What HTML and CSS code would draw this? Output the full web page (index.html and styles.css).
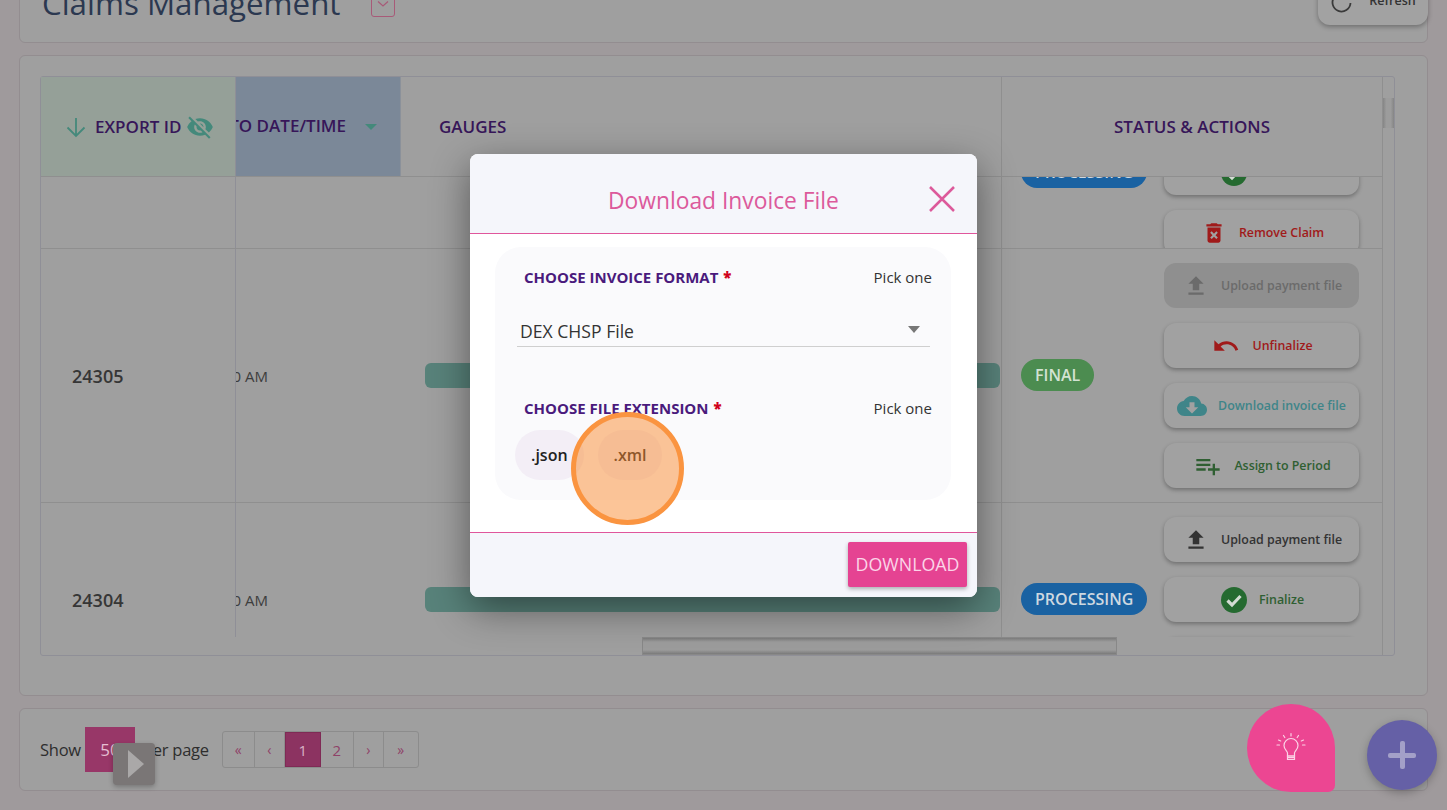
FILE: index.html
```html
<!DOCTYPE html>
<html lang="en">
<head>
<meta charset="utf-8">
<title>Claims Management</title>
<link rel="stylesheet" href="styles.css">
</head>
<body>
<svg class="defs" width="0" height="0" aria-hidden="true">
  <symbol id="i-upload" viewBox="0 0 24 24"><path d="M9 16h6v-6h4l-7-7-7 7h4zm-4 2h14v2H5z"/></symbol>
  <symbol id="i-check" viewBox="0 0 26 26"><circle cx="13" cy="13" r="13"/><path d="M6.5 13.5l4.5 4.5 8.5-9" fill="none" stroke="#d3dcd3" stroke-width="3.2"/></symbol>
  <symbol id="i-trash" viewBox="0 0 24 24"><path d="M6 19c0 1.100.9 2 2 2h8c1.100 0 2-.9 2-2V7H6v12zm2.460-7.120l1.410-1.410L12 12.590l2.120-2.120 1.410 1.410L13.410 14l2.120 2.120-1.410 1.410L12 15.410l-2.120 2.120-1.410-1.410L10.590 14l-2.130-2.120zM15.500 4l-1-1h-5l-1 1H5v2h14V4z"/></symbol>
  <symbol id="i-undo" viewBox="0 0 24 24"><path d="M12.500 8c-2.650 0-5.050.99-6.900 2.600L2 7v9h9l-3.620-3.620c1.390-1.160 3.160-1.880 5.120-1.880 3.540 0 6.550 2.310 7.600 5.500l2.370-.78C21.080 11.030 17.150 8 12.500 8z"/></symbol>
  <symbol id="i-cloud" viewBox="0 0 24 24"><path d="M19.350 10.040C18.670 6.590 15.640 4 12 4 9.110 4 6.600 5.640 5.350 8.040 2.340 8.360 0 10.910 0 14c0 3.310 2.690 6 6 6h13c2.760 0 5-2.240 5-5 0-2.640-2.050-4.780-4.650-4.960zM17 13l-5 5-5-5h3V9h4v4h3z"/></symbol>
  <symbol id="i-assign" viewBox="0 0 24 24"><path d="M14 10H2v2h12v-2zm0-4H2v2h12V6zm4 8v-4h-2v4h-4v2h4v4h2v-4h4v-2h-4zM2 16h8v-2H2v2z"/></symbol>
</svg>

<div class="page">
  <section class="card card-title">
    <div class="title-group">
      <h1 class="page-title">Claims Management</h1>
      <span class="chevron-box">
        <svg width="14" height="8" viewBox="0 0 14 8"><path d="M2 1.500l5 4.500 5-4.500" fill="none" stroke="#a85a78" stroke-width="1.200"/></svg>
      </span>
    </div>
    <button class="refresh-btn">
      <svg width="24" height="24" viewBox="0 0 24 24"><path d="M19 8.500A9 9 0 1 0 20.500 14" fill="none" stroke="#3a3a3a" stroke-width="1.800"/><path d="M20 3v7h-7z" fill="#3a3a3a"/></svg>
      <span>Refresh</span>
    </button>
  </section>

  <section class="card card-table">
    <div class="tbl-box">
      <div class="tbl-main">
        <div class="tbl-grid tbl-head">
          <div class="th th-export">
            <svg class="i-arrow" width="24" height="24" viewBox="0 0 24 24"><path d="M12 3v18M3.500 12.500l8.500 8.500 8.500-8.500" fill="none" stroke="#44897b" stroke-width="1.800"/></svg>
            <span>EXPORT ID</span>
            <svg class="i-eye" width="28" height="28" viewBox="0 0 24 24"><path fill="#44897b" d="M12 7c2.760 0 5 2.240 5 5 0 .65-.13 1.260-.36 1.830l2.920 2.920c1.510-1.260 2.700-2.890 3.430-4.750-1.730-4.390-6-7.500-11-7.500-1.400 0-2.740.25-3.980.7l2.160 2.160C10.740 7.130 11.350 7 12 7zM2 4.270l2.280 2.280.46.46C3.080 8.300 1.780 10.020 1 12c1.730 4.390 6 7.500 11 7.500 1.550 0 3.030-.3 4.380-.84l.42.42L19.730 22 21 20.730 3.270 3 2 4.270zM7.530 9.800l1.550 1.550c-.05.21-.08.43-.08.65 0 1.660 1.340 3 3 3 .22 0 .44-.03.65-.08l1.550 1.550c-.67.33-1.410.53-2.200.53-2.760 0-5-2.240-5-5 0-.79.2-1.530.53-2.200zm4.310-.78l3.150 3.150.02-.16c0-1.660-1.340-3-3-3l-.17.01z"/></svg>
          </div>
          <div class="th th-date">
            <span>TO DATE/TIME</span>
            <i class="sort-caret"></i>
          </div>
          <div class="th th-gauges"><span>GAUGES</span></div>
          <div class="th th-status"><span>STATUS &amp; ACTIONS</span></div>
        </div>

        <div class="tbl-body">
          <div class="tbl-grid row row-clipped">
            <div class="td td-id"></div>
            <div class="td td-date"></div>
            <div class="td td-gauge"></div>
            <div class="td td-status">
              <div class="pill-col"><span class="pill pill-blue">PROCESSING</span></div>
              <div class="actions">
                <a class="act act-dark"><svg class="ic" width="26" height="26"><use href="#i-upload"/></svg><span>Upload payment file</span></a>
                <a class="act act-green"><svg class="ic ic-check" width="26" height="26"><use href="#i-check"/></svg><span>Finalize</span></a>
                <a class="act act-red"><svg class="ic" width="26" height="26"><use href="#i-trash"/></svg><span>Remove Claim</span></a>
              </div>
            </div>
          </div>

          <div class="tbl-grid row">
            <div class="td td-id">24305</div>
            <div class="td td-date"><span>10:30 AM</span></div>
            <div class="td td-gauge"><div class="gauge"></div></div>
            <div class="td td-status">
              <div class="pill-col"><span class="pill pill-green">FINAL</span></div>
              <div class="actions">
                <a class="act act-disabled"><svg class="ic" width="26" height="26"><use href="#i-upload"/></svg><span>Upload payment file</span></a>
                <a class="act act-red"><svg class="ic" width="28" height="28"><use href="#i-undo"/></svg><span>Unfinalize</span></a>
                <a class="act act-teal"><svg class="ic" width="30" height="30"><use href="#i-cloud"/></svg><span>Download invoice file</span></a>
                <a class="act act-green"><svg class="ic" width="28" height="28"><use href="#i-assign"/></svg><span>Assign to Period</span></a>
              </div>
            </div>
          </div>

          <div class="tbl-grid row">
            <div class="td td-id">24304</div>
            <div class="td td-date"><span>10:30 AM</span></div>
            <div class="td td-gauge"><div class="gauge"></div></div>
            <div class="td td-status">
              <div class="pill-col"><span class="pill pill-blue">PROCESSING</span></div>
              <div class="actions">
                <a class="act act-dark"><svg class="ic" width="26" height="26"><use href="#i-upload"/></svg><span>Upload payment file</span></a>
                <a class="act act-green"><svg class="ic ic-check" width="26" height="26"><use href="#i-check"/></svg><span>Finalize</span></a>
                <a class="act act-red"><svg class="ic" width="26" height="26"><use href="#i-trash"/></svg><span>Remove Claim</span></a>
              </div>
            </div>
          </div>
        </div>

        <div class="hscroll"><div class="hthumb"></div></div>
      </div>
      <div class="vscroll"><div class="vthumb"></div></div>
    </div>
  </section>

  <section class="card card-pager">
    <span class="pager-text">Show</span>
    <span class="per-box">50</span>
    <span class="pager-text">per page</span>
    <nav class="pager">
      <a class="pg pg-first">«</a>
      <a class="pg pg-prev">‹</a>
      <a class="pg pg-num pg-active">1</a>
      <a class="pg pg-num">2</a>
      <a class="pg pg-prev">›</a>
      <a class="pg pg-last">»</a>
    </nav>
  </section>
</div>

<div class="play-btn"><i class="play-tri"></i></div>

<div class="bulb-fab">
  <svg width="34" height="34" viewBox="0 0 34 34" fill="none" stroke="#fbd3e6" stroke-width="1.200" stroke-linecap="round">
    <path d="M13.500 25v-3c0-1.500-3.500-3.500-3.500-7.500a7 7 0 0 1 14 0c0 4-3.500 6-3.500 7.500v3z"/>
    <path d="M13.500 25h7v3.500h-7zM13.500 26.700h7"/>
    <path d="M17 2.500v2.500M9.500 4.500l1.300 2M24.500 4.500l-1.300 2M4.500 9l2.200 1M29.500 9l-2.200 1M3 14h2.500M28.500 14h2.500"/>
  </svg>
</div>
<div class="plus-fab"><i class="plus-h"></i><i class="plus-v"></i></div>

<div class="modal">
  <header class="modal-head">
    <h2 class="modal-title">Download Invoice File</h2>
    <svg class="modal-close" width="28" height="28" viewBox="0 0 28 28"><path d="M2 2l24 24M26 2L2 26" fill="none" stroke="#dc5a9b" stroke-width="2.500"/></svg>
  </header>
  <div class="modal-body">
    <div class="panel">
      <div class="field-head">
        <span class="field-label">CHOOSE INVOICE FORMAT <b class="req">*</b></span>
        <span class="field-hint">Pick one</span>
      </div>
      <div class="select">
        <span>DEX CHSP File</span>
        <i class="select-caret"></i>
      </div>
      <div class="field-head field-head-2">
        <span class="field-label">CHOOSE FILE EXTENSION <b class="req">*</b></span>
        <span class="field-hint">Pick one</span>
      </div>
      <div class="chips">
        <span class="chip">.json</span>
        <span class="chip">.xml</span>
      </div>
    </div>
  </div>
  <footer class="modal-foot">
    <button class="download-btn">DOWNLOAD</button>
  </footer>
</div>

<div class="click-spot"></div>
</body>
</html>
```

FILE: styles.css
```css
* { box-sizing: border-box; }
html, body { margin: 0; height: 810px; overflow: hidden; }
body {
  background: #9f9a9c;
  font-family: "Open Sans", "Liberation Sans", sans-serif;
  color: #333;
}
.defs { position: absolute; }
.page {
  display: flex;
  flex-direction: column;
  gap: 12px;
  padding: 0 19px;
  margin-top: -31px;
}
.card {
  background: #9f9f9f;
  border: 1px solid #938d90;
  border-radius: 6px;
}

/* title card */
.card-title {
  height: 74px;
  display: flex;
  justify-content: space-between;
  align-items: flex-start;
  padding-left: 22px;
}
.title-group { display: flex; align-items: flex-start; }
.page-title {
  margin: 13px 0 0;
  font-size: 31.300px;
  line-height: 40px;
  font-weight: 500;
  color: #2b3850;
  white-space: nowrap;
}
.chevron-box {
  margin: 22px 0 0 30px;
  width: 24px;
  height: 25px;
  border: 1px solid #a85a78;
  border-radius: 3px;
  display: flex;
  align-items: flex-end;
  justify-content: center;
  padding-bottom: 8px;
}
.refresh-btn {
  width: 110px;
  height: 55px;
  border: 0;
  margin-right: -1px;
  background: #a2a2a2;
  border-radius: 12px;
  box-shadow: 0 2px 5px rgba(0,0,0,.3);
  display: flex;
  align-items: flex-end;
  justify-content: center;
  gap: 15px;
  padding: 0 0 12px;
  font: 600 12.5px "Open Sans", sans-serif;
  color: #333;
}
.refresh-btn span { margin-bottom: 4px; }

/* table card */
.card-table {
  height: 641px;
  padding: 20px 32px 0 20px;
}
.tbl-box {
  display: flex;
  height: 580px;
  border: 1px solid #8f8f97;
  border-radius: 3px;
}
.tbl-main { width: 1341px; display: flex; flex-direction: column; }
.tbl-grid {
  display: grid;
  grid-template-columns: 195px 165px 601px 380px;
}
.tbl-head { height: 100px; border-bottom: 1px solid #8f8f8f; }
.th {
  display: flex;
  align-items: center;
  font-size: 17px;
  font-weight: 600;
  color: #371659;
  white-space: nowrap;
  overflow: hidden;
}
.th-export { background: #95a098; padding-left: 23px; border-right: 1px solid #8f8f97; }
.th-export span { margin-left: 7px; }
.i-arrow { flex: none; }
.i-eye { flex: none; margin-left: 5px; }
.th-date {
  background: #7b8898;
  justify-content: flex-end;
  padding-right: 23px;
  border-right: 1px solid #8b919a;
}
.th-date span { flex: none; margin-top: -3px; }
.sort-caret {
  flex: none;
  margin-left: 19px;
  border-left: 6px solid transparent;
  border-right: 6px solid transparent;
  border-top: 6px solid #44897b;
}
.th-gauges { padding-left: 38px; border-right: 1px solid #8f8f8f; }
.th-status { justify-content: center; }

.tbl-body { height: 460px; overflow: hidden; }
.row { border-bottom: 1px solid #8f8f8f; }
.row-clipped { height: 72px; overflow: hidden; align-items: start; }
.row-clipped .td-status { margin-top: -101px; }
.td {
  display: flex;
  align-items: center;
  overflow: hidden;
  min-width: 0;
}
.row-clipped .td-id, .row-clipped .td-date, .row-clipped .td-gauge { height: 72px; }
.td-id {
  padding-left: 31px;
  font-size: 18px;
  font-weight: 600;
  color: #363636;
  border-right: 1px solid #8f8f97;
}
.td-date {
  justify-content: flex-end;
  padding-right: 133px;
  font-size: 15px;
  color: #3d3d3d;
  white-space: nowrap;
}
.td-date span { flex: none; }
.td-gauge {
  padding-left: 24px;
  border-right: 1px solid #8f8f8f;
}
.gauge {
  width: 575px;
  height: 25px;
  border-radius: 6px;
  background: #58827a;
}
.td-status { overflow: visible; }
.pill-col { width: 162px; flex: none; padding-left: 19px; display: flex; }
.pill {
  height: 32px;
  margin-bottom: 1px;
  padding: 0 14px;
  border-radius: 16px;
  line-height: 32px;
  font-size: 16px;
  font-weight: 600;
  color: #ced8e0;
}
.pill-blue { background: #1a62a2; }
.pill-green { background: #4c8c50; color: #d3e2d3; }
.actions {
  display: flex;
  flex-direction: column;
  gap: 15px;
  padding: 14px 0;
}
.act {
  width: 195px;
  height: 45px;
  border-radius: 12px;
  background: #a1a1a1;
  box-shadow: 0 2px 4px rgba(0,0,0,.3);
  display: flex;
  align-items: center;
  justify-content: center;
  gap: 12px;
  padding-left: 2px;
  font-size: 12.400px;
  font-weight: 600;
  white-space: nowrap;
}
.ic { flex: none; fill: currentColor; }
.act-dark { color: #333; }
.act-green { color: #2f5f32; }
.act-green .ic-check { color: #256a30; }
.act-red { color: #a01a1a; }
.act-teal { color: #3f8589; gap: 11px; padding-left: 0; }
.act-disabled { background: #8f8f8f; color: #6b6b6b; box-shadow: none; }

.hscroll { height: 18px; flex: none; }
.hthumb {
  width: 475px;
  height: 18px;
  margin-left: 601px;
  background: linear-gradient(#7a7a7a, #9c9c9c 25%, #9c9c9c 75%, #7a7a7a);
  border: 1px solid #888;
}
.vscroll { flex: 1; border-left: 1px solid #8f8f8f; }
.vthumb {
  height: 30px;
  margin-top: 21px;
  background: linear-gradient(90deg, #858585, #9c9c9c 30%, #9c9c9c 70%, #858585);
}

/* pager card */
.card-pager {
  height: 83px;
  display: flex;
  align-items: center;
  padding-left: 20px;
}
.pager-text { font-size: 16.500px; letter-spacing: -0.25px; color: #2e2e2e; }
.per-box {
  width: 50px;
  height: 45px;
  margin: 0 8px 0 4px;
  background: #983768;
  color: #e5bfd2;
  font-size: 17px;
  font-weight: 500;
  display: flex;
  align-items: center;
  justify-content: center;
}
.pager {
  display: flex;
  height: 37px;
  margin-left: 13px;
  border: 1px solid #8c8c8c;
  border-radius: 3px;
}
.pg {
  display: flex;
  align-items: center;
  justify-content: center;
  border-right: 1px solid #8c8c8c;
  color: #8f4268;
  font-size: 14px;
}
.pg-first { width: 32px; }
.pg-prev { width: 30px; }
.pg-last { width: 34px; border-right: 0; }
.pg-num { width: 33px; font-size: 15px; }
.pg-active { width: 36px; background: #8c3361; color: #d9b3c6; border: 1px solid #7f2a55; }

/* overlays */
.play-btn {
  position: absolute;
  left: 113px;
  top: 743px;
  width: 42px;
  height: 42px;
  border-radius: 4px;
  background: #7a7676;
  box-shadow: 0 2px 5px rgba(0,0,0,.25);
  display: flex;
  align-items: center;
  justify-content: center;
}
.play-tri {
  margin-left: 3px;
  border-left: 16px solid #aaa8a8;
  border-top: 14px solid transparent;
  border-bottom: 14px solid transparent;
}
.bulb-fab {
  position: absolute;
  left: 1247px;
  top: 704px;
  width: 88px;
  height: 88px;
  border-radius: 50% 50% 7px 50%;
  background: #ec4692;
  display: flex;
  align-items: center;
  justify-content: center;
}
.plus-fab {
  position: absolute;
  left: 1367px;
  top: 720px;
  width: 70px;
  height: 70px;
  border-radius: 50%;
  background: #6560a6;
  box-shadow: 0 3px 8px rgba(0,0,0,.25);
}
.plus-h, .plus-v { position: absolute; background: #a3a0c8; border-radius: 2px; }
.plus-h { left: 21px; top: 32.500px; width: 28px; height: 5px; }
.plus-v { left: 32.500px; top: 21px; width: 5px; height: 28px; }

/* modal */
.modal {
  position: absolute;
  left: 470px;
  top: 154px;
  width: 507px;
  height: 443px;
  border-radius: 8px;
  overflow: hidden;
  background: #fff;
  box-shadow: 0 12px 38px rgba(0,0,0,.45);
  display: flex;
  flex-direction: column;
}
.modal-head {
  height: 79px;
  flex: none;
  background: #f5f6fb;
  display: flex;
  align-items: center;
  justify-content: center;
  position: relative;
}
.modal-title {
  margin: 14px 0 0 0;
  font-size: 22.800px;
  font-weight: 400;
  color: #dc5a9b;
}
.modal-close { position: absolute; left: 458px; top: 31px; }
.modal-body { flex: 1; padding: 13px 26px 0 25px; border-top: 1px solid #e0569c; }
.panel {
  height: 253px;
  background: #fafafc;
  border-radius: 26px;
  padding: 20px 19px 0 21px;
}
.field-head {
  display: flex;
  justify-content: space-between;
  padding-left: 8px;
  line-height: 20px;
}
.field-head-2 { margin-top: 51px; }
.field-label { font-size: 15px; font-weight: 700; color: #4a1a7c; }
.req { color: #d0021b; margin-left: 1px; }
.field-hint { font-size: 15px; color: #333; }
.select {
  margin: 21px 2px 0 1px;
  height: 39px;
  padding: 10px 4px 0 3px;
  border-bottom: 1px solid #cfcfcf;
  display: flex;
  justify-content: space-between;
  font-size: 17.600px;
  color: #333;
  line-height: 26px;
}
.select-caret {
  margin: 8px 6px 0 0;
  border-left: 6px solid transparent;
  border-right: 6px solid transparent;
  border-top: 7px solid #777;
  height: 0;
}
.chips { display: flex; gap: 14px; margin: 12px 0 0 -1px; }
.chip {
  height: 50px;
  padding: 0 16px;
  border-radius: 25px;
  background: #f3eef6;
  font-size: 16px;
  font-weight: 600;
  color: #222;
  line-height: 50px;
}
.modal-foot {
  height: 65px;
  flex: none;
  background: #f5f6fb;
  border-top: 1px solid #e0569c;
  display: flex;
  justify-content: flex-end;
  padding: 9px 10px 0 0;
}
.download-btn {
  width: 119px;
  height: 45px;
  border: 0;
  border-radius: 2px;
  background: #e54392;
  color: #fbd5e8;
  font: 500 17.800px "Open Sans", sans-serif;
  padding: 0 0 2px;
  box-shadow: 0 2px 4px rgba(0,0,0,.3);
}
.click-spot {
  position: absolute;
  left: 571px;
  top: 412px;
  width: 113px;
  height: 113px;
  border-radius: 50%;
  border: 5px solid #fa9440;
  background: rgba(249,140,50,.5);
}
```
